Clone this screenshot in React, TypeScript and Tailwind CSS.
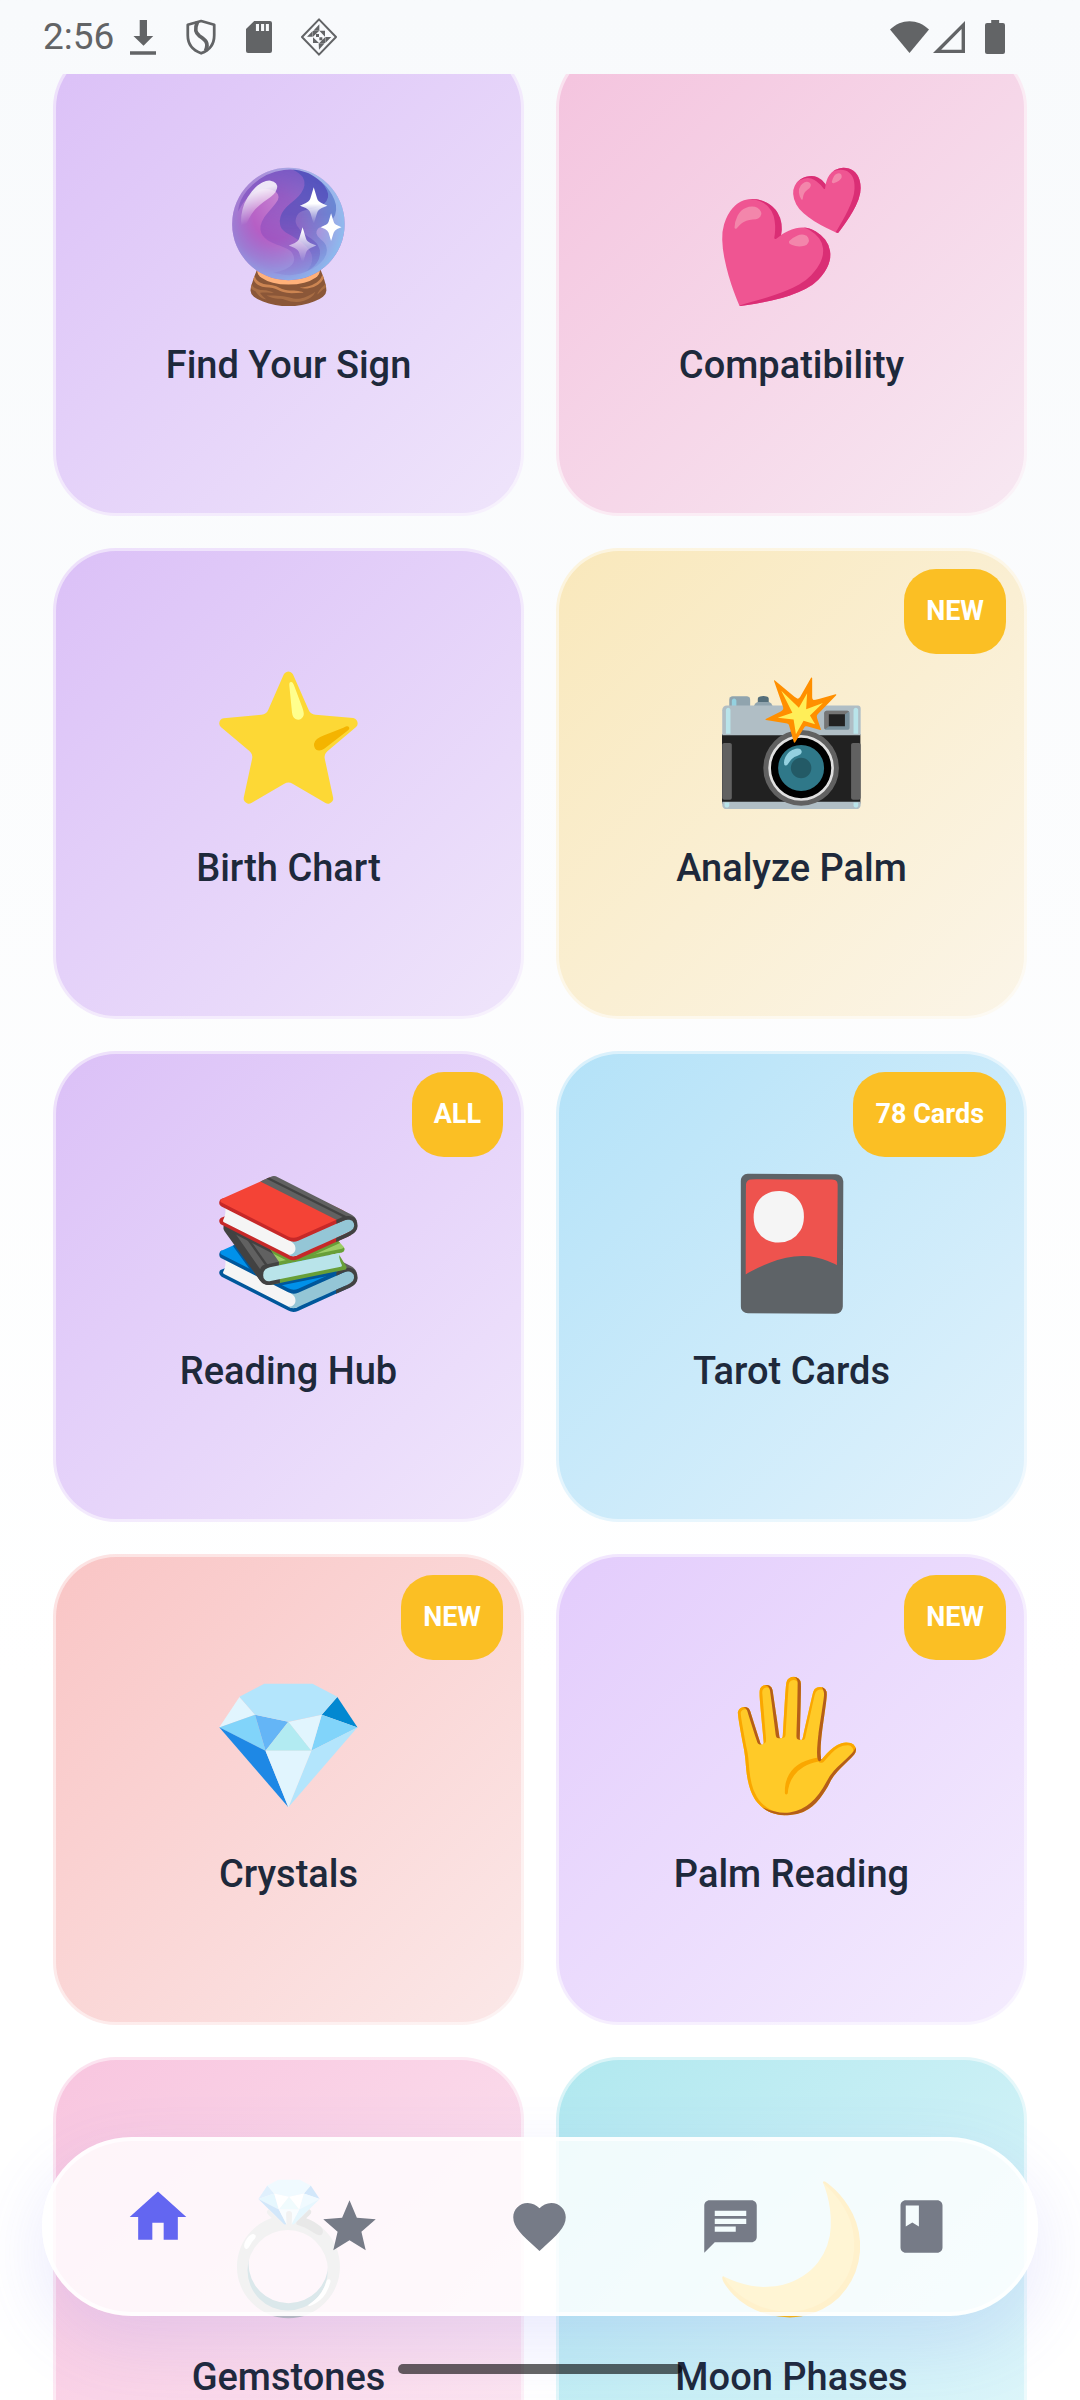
import { MdBook, MdChat, MdFavorite, MdHome, MdStar } from "react-icons/md";
import type { IconType } from "react-icons";

type Feature = {
  title: string;
  emoji: string;
  gradient: string;
  badge?: string;
};

const features: Feature[] = [
  { title: "Find Your Sign", emoji: "🔮", gradient: "from-[#dbc0f7] to-[#efe5fb]" },
  { title: "Compatibility", emoji: "💕", gradient: "from-[#f4c3de] to-[#f7e8f2]" },
  { title: "Birth Chart", emoji: "⭐", gradient: "from-[#dbc0f7] to-[#efe5fb]" },
  { title: "Analyze Palm", emoji: "📸", gradient: "from-[#f9e8bb] to-[#fbf5e8]", badge: "NEW" },
  { title: "Reading Hub", emoji: "📚", gradient: "from-[#dbc0f7] to-[#f0e6fc]", badge: "ALL" },
  { title: "Tarot Cards", emoji: "🎴", gradient: "from-[#b3e2f8] to-[#e1f2fc]", badge: "78 Cards" },
  { title: "Crystals", emoji: "💎", gradient: "from-[#f9c5c5] to-[#fbe8e8]", badge: "NEW" },
  { title: "Palm Reading", emoji: "🖐", gradient: "from-[#e3ccfc] to-[#f4ecfe]", badge: "NEW" },
  { title: "Gemstones", emoji: "💍", gradient: "from-[#f8c5df] to-[#fce9f3]" },
  { title: "Moon Phases", emoji: "🌙", gradient: "from-[#b0e8ef] to-[#e2f7fb]" },
];

const tabs: { label: string; icon: IconType; active?: boolean }[] = [
  { label: "Home", icon: MdHome, active: true },
  { label: "Horoscope", icon: MdStar },
  { label: "Love", icon: MdFavorite },
  { label: "Chat", icon: MdChat },
  { label: "Journal", icon: MdBook },
];

function StatusBar() {
  return (
    <header className="flex h-[74px] shrink-0 items-center justify-between pr-[75px] pl-[43px] text-[#626466]">
      <div className="flex items-center gap-7">
        <time className="-mr-3 text-[37px] leading-[44px]">2:56</time>
        <svg className="h-[35px] w-[26px]" viewBox="381 64 75 103" preserveAspectRatio="none" fill="currentColor" aria-hidden="true">
          <path d="M409 64h21v47h18L420 140 391 111h18zM381 156h75v10h-75z" />
        </svg>
        <svg className="h-[38px] w-[34px]" viewBox="538 58 99 114" preserveAspectRatio="none" fill="none" stroke="currentColor" aria-hidden="true">
          <path strokeWidth="8" strokeLinejoin="round" d="M588 67 626 78v32c0 28-16 46-38 54-22-8-39-26-39-54V78z" />
          <path strokeWidth="11" d="M577 70c-9 22-6 33 6 42 18 12 28 20 18 44" />
        </svg>
        <svg className="h-8 w-[26px]" viewBox="717 66 76 96" preserveAspectRatio="none" fill="currentColor" fillRule="evenodd" aria-hidden="true">
          <path d="M741 66h46q6 0 6 6v84q0 6-6 6h-64q-6 0-6-6V90zM746 75v21h9V75zM761 75v21h9V75zM775 75v21h9V75z" />
        </svg>
        <svg className="h-[38px] w-[38px]" viewBox="867 57 112 114" aria-hidden="true">
          <path fill="none" stroke="currentColor" strokeWidth="6" strokeLinejoin="round" d="m923 61 51 53-51 53-51-53z" />
          <path
            fill="currentColor"
            d="M924 76v19h-18zM887 113l17-17v17zM924 95h17v18zM905 96h18l-18 17zM905 115l18 17h-18zM941 115v17h-17zM942 114h18l-18 18zM922 133h18l-17 19zM914 105h9v9h-9zM924 115h9v9h-9z"
          />
        </svg>
      </div>
      <div className="flex items-center">
        <svg className="h-8 w-[39px]" viewBox="1020 60 112 98" preserveAspectRatio="none" fill="currentColor" aria-hidden="true">
          <path d="M1020 86C1052 52 1100 52 1132 86L1076 158z" />
        </svg>
        <svg className="ml-1 h-8 w-8" viewBox="1143 62 94 96" preserveAspectRatio="none" fill="currentColor" fillRule="evenodd" aria-hidden="true">
          <path d="M1237 62v96h-94zM1227 86v62h-60z" />
        </svg>
        <svg className="ml-5 h-[34px] w-5" viewBox="1292 60 58 101" preserveAspectRatio="none" fill="currentColor" aria-hidden="true">
          <path d="M1310 60h23v9h11q6 0 6 6v80q0 6-6 6h-46q-6 0-6-6V75q0-6 6-6h12z" />
        </svg>
      </div>
    </header>
  );
}

function FeatureCard({ title, emoji, gradient, badge }: Feature) {
  return (
    <button
      type="button"
      className={`relative flex aspect-square flex-col items-center justify-center rounded-[63px] border-3 border-white/50 bg-linear-135 bg-origin-border pb-2.5 ${gradient}`}
    >
      {badge && (
        <span className="absolute top-[18px] right-[18px] rounded-[32px] bg-[#fbbf24] px-[22px] text-[27px] leading-[85px] font-bold text-white">
          {badge}
        </span>
      )}
      <span className="text-[126px] leading-[148px]" aria-hidden="true">
        {emoji}
      </span>
      <span className="mt-[30px] text-[38px] leading-[48px] font-medium text-[#1e293b]">{title}</span>
    </button>
  );
}

function TabBar() {
  return (
    <nav className="fixed inset-x-[42px] bottom-[84px] flex h-[179px] items-center rounded-full border-4 border-white/70 bg-white/80 bg-clip-border px-[17px] shadow-[0_26px_72px_rgba(99,102,241,0.14)]">
      {tabs.map(({ label, icon: Icon, active }) => (
        <button
          key={label}
          type="button"
          aria-label={label}
          aria-current={active ? "page" : undefined}
          className={`flex flex-1 justify-center ${active ? "pb-5 text-[#6366f1]" : "text-[#767b87]"}`}
        >
          <Icon className={active ? "size-[68px]" : "size-[63px]"} />
        </button>
      ))}
    </nav>
  );
}

export default function App() {
  return (
    <div className="flex h-screen flex-col overflow-hidden bg-linear-to-b from-[#f8fafc] to-white to-70% font-['Roboto','Noto_Color_Emoji',sans-serif]">
      <StatusBar />
      <main className="min-h-0 flex-1 overflow-hidden">
        <div className="-mt-[29px] grid grid-cols-2 gap-8 px-[53px]">
          {features.map((feature) => (
            <FeatureCard key={feature.title} {...feature} />
          ))}
        </div>
      </main>
      <TabBar />
      <div className="fixed bottom-[26px] left-1/2 h-2.5 w-[284px] -translate-x-1/2 rounded-full bg-black/60" />
    </div>
  );
}
